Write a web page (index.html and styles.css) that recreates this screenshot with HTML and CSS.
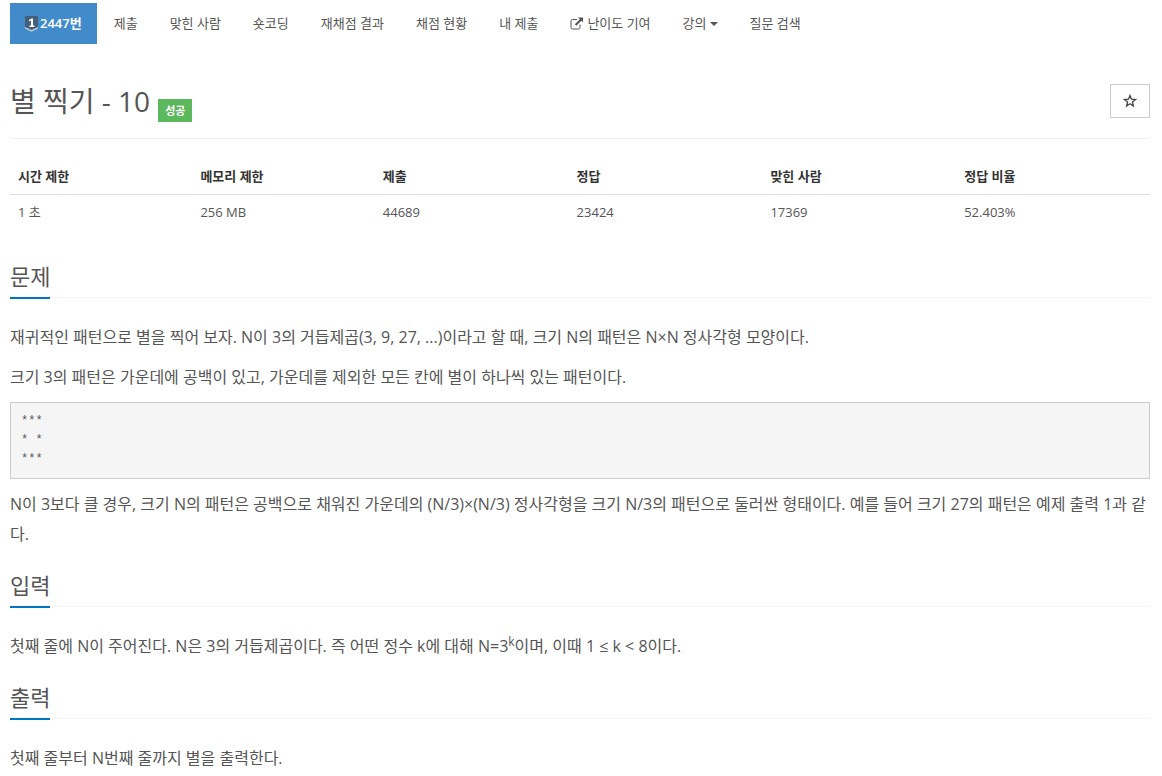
FILE: index.html
```
<!DOCTYPE html>
<html lang="ko">

	<head>
		<meta charset="UTF-8">
		<meta name="viewport" content="width=device-width, initial-scale=1">
		<title>2447번: 별 찍기 - 10</title>
		<link rel="stylesheet" href="styles.css">
	</head>

	<body>
		<div class="container">

			<!-- problem menu -->
			<nav>
				<ul class="problem-menu">
					<li class="active">
						<a href="#">
							<svg class="tier" viewBox="0 0 13 16" role="img" aria-label="Silver I">
								<path d="M0 0h13v11.500l-6.500 3.500l-6.500-3.500z" fill="#435f7a"/>
								<path d="M0 11l6.500 3l6.500-3v1.500l-6.500 3.200l-6.500-3.200z" fill="#bccbda"/>
								<path d="M4 4l2.500-1.500h1.500v7h1.500v1.500h-5v-1.500h1.500v-5l-2 1z" fill="#fff"/>
							</svg>
							2447번
						</a>
					</li>
					<li><a href="#">제출</a></li>
					<li><a href="#">맞힌 사람</a></li>
					<li><a href="#">숏코딩</a></li>
					<li><a href="#">재채점 결과</a></li>
					<li><a href="#">채점 현황</a></li>
					<li><a href="#">내 제출</a></li>
					<li>
						<a href="#">
							<svg class="external" viewBox="0 0 13 13" aria-hidden="true">
								<path d="M7 2.500H2.500a1.500 1.500 0 0 0-1.500 1.500v6.500a1.500 1.500 0 0 0 1.500 1.500h6a1.500 1.500 0 0 0 1.500-1.500V7.500" fill="none" stroke="#555" stroke-width="1"/>
								<path d="M8 .5h5v5l-1.700-1.700l-5 5l-1.500-1.500l5-5z" fill="#555"/>
							</svg>
							난이도 기여
						</a>
					</li>
					<li><a href="#">강의<span class="caret"></span></a></li>
					<li><a href="#">질문 검색</a></li>
				</ul>
			</nav>

			<!-- title -->
			<header class="page-header">
				<h1>별 찍기 - 10</h1>
				<span class="label-success">성공</span>
				<button type="button" class="btn-star" aria-label="즐겨찾기">
					<svg viewBox="0 0 14 14" aria-hidden="true">
						<path d="M7 1.500l1.500 3.700l4 .3l-3.100 2.500l1 4l-3.400-2.200l-3.400 2.200l1-4l-3.100-2.500l4-.3z" fill="none" stroke="#444" stroke-width="1.300"/>
					</svg>
				</button>
			</header>

			<table class="problem-info">
				<thead>
					<tr>
						<th class="limit">시간 제한</th>
						<th class="limit">메모리 제한</th>
						<th>제출</th>
						<th>정답</th>
						<th>맞힌 사람</th>
						<th>정답 비율</th>
					</tr>
				</thead>
				<tbody>
					<tr>
						<td>1 초</td>
						<td>256 MB</td>
						<td>44689</td>
						<td>23424</td>
						<td>17369</td>
						<td>52.403%</td>
					</tr>
				</tbody>
			</table>

			<section>
				<div class="headline"><h2>문제</h2></div>
				<div class="problem-text">
					<p>재귀적인 패턴으로 별을 찍어 보자. N이 3의 거듭제곱(3, 9, 27, ...)이라고 할 때, 크기 N의 패턴은 N×N 정사각형 모양이다.</p>
					<p>크기 3의 패턴은 가운데에 공백이 있고, 가운데를 제외한 모든 칸에 별이 하나씩 있는 패턴이다.</p>
<pre>***
* *
***</pre>
					<p>N이 3보다 클 경우, 크기 N의 패턴은 공백으로 채워진 가운데의 (N/3)×(N/3) 정사각형을 크기 N/3의 패턴으로 둘러싼 형태이다. 예를 들어 크기 27의 패턴은 예제 출력 1과 같다.</p>
				</div>
			</section>

			<section>
				<div class="headline"><h2>입력</h2></div>
				<div class="problem-text">
					<p>첫째 줄에 N이 주어진다. N은 3의 거듭제곱이다. 즉 어떤 정수 k에 대해 N=3<sup>k</sup>이며, 이때 1 ≤ k &lt; 8이다.</p>
				</div>
			</section>

			<section>
				<div class="headline"><h2>출력</h2></div>
				<div class="problem-text">
					<p>첫째 줄부터 N번째 줄까지 별을 출력한다.</p>
				</div>
			</section>

		</div>
	</body>
</html>
```

FILE: styles.css
```
* {
	box-sizing: border-box;
	margin: 0;
	padding: 0;
}

body {
	font: 13px/21px "Open Sans", "Noto Sans CJK KR", sans-serif;
	color: #555;
	background: #fff;
}

a {
	color: #555;
	text-decoration: none;
}

.container {
	padding: 3px 12px 0 10px;
}

/* problem menu */
.problem-menu {
	display: flex;
	flex-wrap: wrap;
	gap: 2px;
	list-style: none;
}

.problem-menu a {
	display: flex;
	align-items: center;
	padding: 10px 15px;
}

.problem-menu a:hover {
	background: #eee;
}

.problem-menu .active a {
	color: #fff;
	font-weight: 600;
	background: #428bca;
}

.tier {
	width: 13px;
	height: 16px;
	margin-right: 2px;
}

.external {
	width: 13px;
	height: 13px;
	margin-right: 4px;
}

.caret {
	margin-left: 3px;
	border-top: 4px solid #555;
	border-left: 4px solid transparent;
	border-right: 4px solid transparent;
}

/* title */
.page-header {
	display: flex;
	align-items: center;
	gap: 8px;
	margin: 36px 0 20px;
	padding-bottom: 16px;
	border-bottom: 1px solid #eee;
}

.page-header h1 {
	font-size: 28px;
	font-weight: 400;
	line-height: 42px;
}

.label-success {
	align-self: flex-end;
	padding: 0 7px;
	font-size: 11px;
	font-weight: 700;
	line-height: 23px;
	color: #fff;
	background: #5cb85c;
}

.btn-star {
	display: flex;
	align-items: center;
	justify-content: center;
	width: 40px;
	height: 34px;
	margin-left: auto;
	border: 1px solid #ccc;
	background: #fff;
	cursor: pointer;
}

.btn-star svg {
	width: 14px;
	height: 14px;
}

/* limits and statistics */
.problem-info {
	width: 100%;
	table-layout: fixed;
	border-collapse: collapse;
	margin-bottom: 30px;
}

.problem-info th,
.problem-info td {
	padding: 7px 8px;
	text-align: left;
}

.problem-info th {
	width: 17%;
	color: #333;
	border-bottom: 1px solid #ddd;
}

.problem-info .limit {
	width: 16%;
}

/* sections */
.headline {
	display: flex;
	margin-bottom: 24px;
	border-bottom: 1px solid #f5f5f5;
}

.headline h2 {
	margin-bottom: -2px;
	padding-bottom: 4px;
	font-size: 22px;
	font-weight: 400;
	line-height: 33px;
	border-bottom: 2px solid #0076c0;
}

.problem-text {
	margin-bottom: 20px;
	font-size: 16px;
	line-height: 30px;
}

.problem-text p {
	margin-bottom: 10px;
}

.problem-text p:last-child {
	margin-bottom: 0;
}

.problem-text sup {
	font-size: 12px;
	line-height: 0;
}

.problem-text pre {
	margin-bottom: 10px;
	padding: 9px 10px;
	font: 12px/19px "Liberation Mono", monospace;
	color: #555;
	border: 1px solid #ccc;
	background: #f5f5f5;
}
```
